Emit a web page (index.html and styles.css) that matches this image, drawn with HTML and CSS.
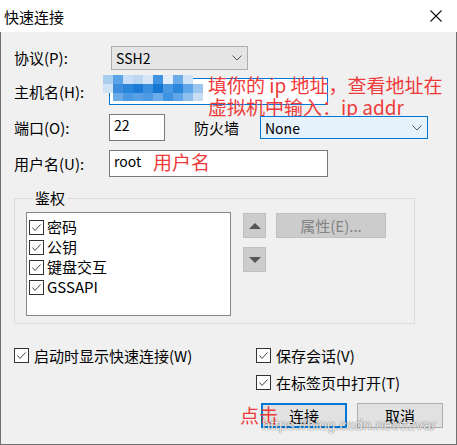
FILE: index.html
```html
<!DOCTYPE html>
<html lang="zh-CN">
<head>
  <meta charset="UTF-8" />
  <title>快速连接</title>
  <link rel="stylesheet" href="styles.css">
</head>
<body>
  <div class="dialog">
    <div class="titlebar">
      <span class="title">快速连接</span>
      <svg class="close" width="12" height="12" viewBox="0 0 12 12">
        <path d="M0.5 0.5 L11.5 11.5 M11.5 0.5 L0.5 11.5" stroke="#111" stroke-width="1.1" fill="none"/>
      </svg>
    </div>

    <div class="content">
      <div class="row row-proto">
        <label class="lbl">协议(P):</label>
        <div class="select select-proto">
          <span>SSH2</span>
          <svg class="chev" width="10" height="6" viewBox="0 0 10 6"><path d="M0.5 0.5 L5 5 L9.5 0.5" stroke="#555" fill="none"/></svg>
        </div>
      </div>

      <div class="row row-host">
        <label class="lbl">主机名(H):</label>
        <div class="input input-host"></div>
        <!-- mosaic over the host address -->
        <svg class="mosaic" width="108" height="26" viewBox="0 0 108 26">
          <g>
            <rect x="0" y="0" width="10" height="9" fill="#a9cdee"/>
            <rect x="10" y="0" width="10" height="9" fill="#5aa3e6"/>
            <rect x="20" y="0" width="10" height="9" fill="#c8def4"/>
            <rect x="30" y="0" width="10" height="9" fill="#bcd7f2"/>
            <rect x="40" y="0" width="10" height="9" fill="#d6e6f7"/>
            <rect x="50" y="0" width="10" height="9" fill="#3f93e0"/>
            <rect x="60" y="0" width="10" height="9" fill="#e3eefa"/>
            <rect x="70" y="0" width="10" height="9" fill="#6aabe8"/>
            <rect x="80" y="0" width="10" height="9" fill="#cfe2f6"/>
            <rect x="0" y="9" width="10" height="9" fill="#cfe2f6"/>
            <rect x="10" y="9" width="10" height="9" fill="#3d8fdd"/>
            <rect x="20" y="9" width="10" height="9" fill="#2a86db"/>
            <rect x="30" y="9" width="10" height="9" fill="#1c7bd7"/>
            <rect x="40" y="9" width="10" height="9" fill="#3a90df"/>
            <rect x="50" y="9" width="10" height="9" fill="#1676d4"/>
            <rect x="60" y="9" width="10" height="9" fill="#4898e2"/>
            <rect x="70" y="9" width="10" height="9" fill="#2b87db"/>
            <rect x="80" y="9" width="10" height="9" fill="#5ea6e7"/>
            <rect x="90" y="9" width="10" height="9" fill="#9cc6ef"/>
            <rect x="10" y="18" width="10" height="8" fill="#6aabe8"/>
            <rect x="20" y="18" width="10" height="8" fill="#4b99e2"/>
            <rect x="30" y="18" width="10" height="8" fill="#57a0e4"/>
            <rect x="40" y="18" width="10" height="8" fill="#4c9ae2"/>
            <rect x="50" y="18" width="10" height="8" fill="#6caceb"/>
            <rect x="60" y="18" width="10" height="8" fill="#3f93e0"/>
            <rect x="70" y="18" width="10" height="8" fill="#5ea6e7"/>
            <rect x="80" y="18" width="10" height="8" fill="#8fbfee"/>
            <rect x="90" y="18" width="10" height="8" fill="#c6ddf4"/>
          </g>
        </svg>
        <div class="note note-host">填你的 ip 地址，查看地址在<br>虚拟机中输入：ip addr</div>
      </div>

      <div class="row row-port">
        <label class="lbl">端口(O):</label>
        <div class="input input-port">22</div>
        <label class="lbl lbl-fw">防火墙</label>
        <div class="select select-fw">
          <span>None</span>
          <svg class="chev" width="10" height="6" viewBox="0 0 10 6"><path d="M0.5 0.5 L5 5 L9.5 0.5" stroke="#555" fill="none"/></svg>
        </div>
      </div>

      <div class="row row-user">
        <label class="lbl">用户名(U):</label>
        <div class="input input-user">root</div>
        <div class="note note-user">用户名</div>
      </div>

      <fieldset class="group">
        <legend>鉴权</legend>
        <div class="group-body">
          <div class="listbox">
            <div class="item"><span class="cb"><svg width="13" height="13" viewBox="0 0 13 13"><path d="M2.5 6.5 L5 9.5 L10.5 3.5" stroke="#444" fill="none"/></svg></span>密码</div>
            <div class="item"><span class="cb"><svg width="13" height="13" viewBox="0 0 13 13"><path d="M2.5 6.5 L5 9.5 L10.5 3.5" stroke="#444" fill="none"/></svg></span>公钥</div>
            <div class="item"><span class="cb"><svg width="13" height="13" viewBox="0 0 13 13"><path d="M2.5 6.5 L5 9.5 L10.5 3.5" stroke="#444" fill="none"/></svg></span>键盘交互</div>
            <div class="item"><span class="cb"><svg width="13" height="13" viewBox="0 0 13 13"><path d="M2.5 6.5 L5 9.5 L10.5 3.5" stroke="#444" fill="none"/></svg></span>GSSAPI</div>
          </div>
          <div class="arrows">
            <div class="btn-sm"><svg width="12" height="6" viewBox="0 0 12 6"><path d="M0 6 L6 0 L12 6 Z" fill="#555"/></svg></div>
            <div class="btn-sm"><svg width="12" height="6" viewBox="0 0 12 6"><path d="M0 0 L12 0 L6 6 Z" fill="#555"/></svg></div>
          </div>
          <div class="btn-props">属性(E)...</div>
        </div>
      </fieldset>

      <div class="options">
        <div class="opt"><span class="cb"><svg width="13" height="13" viewBox="0 0 13 13"><path d="M2.5 6.5 L5 9.5 L10.5 3.5" stroke="#444" fill="none"/></svg></span>启动时显示快速连接(W)</div>
        <div class="opt"><span class="cb"><svg width="13" height="13" viewBox="0 0 13 13"><path d="M2.5 6.5 L5 9.5 L10.5 3.5" stroke="#444" fill="none"/></svg></span>保存会话(V)</div>
        <div></div>
        <div class="opt"><span class="cb"><svg width="13" height="13" viewBox="0 0 13 13"><path d="M2.5 6.5 L5 9.5 L10.5 3.5" stroke="#444" fill="none"/></svg></span>在标签页中打开(T)</div>
      </div>

      <div class="actions">
        <div class="note note-click">点击</div>
        <button class="btn btn-default">连接</button>
        <button class="btn">取消</button>
        <div class="watermark">https://blog.csdn.net/zzvar</div>
      </div>
    </div>
  </div>
</body>
</html>
```

FILE: styles.css
```css
body {
    margin: 0;
    font-family: "Noto Sans CJK SC", sans-serif;
    font-size: 15px;
    color: #000;
    background: #fff;
}
.dialog {
    width: 457px;
    height: 445px;
    display: flex;
    flex-direction: column;
}
.titlebar {
    height: 32px;
    background: #fff;
    display: flex;
    align-items: center;
    justify-content: space-between;
    padding: 0 15px 0 4px;
}
.title {
    font-size: 15px;
    line-height: 18px;
    padding-top: 1px;
}
.close {
    display: block;
}
.content {
    flex: 1;
    background: #f0f0f0;
    border: 1px solid #707070;
    border-top: none;
    padding: 14px 13px 0 13px;
    position: relative;
}

/* form rows */
.row {
    display: flex;
    align-items: center;
    position: relative;
}
.row + .row {
    margin-top: 9px;
}
.row-host {
    margin-top: 8px !important;
}
.lbl {
    width: 95px;
    flex: none;
    line-height: 18px;
}
.lbl-fw {
    width: 66px;
    margin-left: 29px;
}
.select {
    height: 24px;
    box-sizing: border-box;
    border: 1px solid #adadad;
    background: #e5e5e5;
    display: flex;
    align-items: center;
    justify-content: space-between;
    padding: 0 5px 0 4px;
    font-size: 14px;
}
.select-proto {
    width: 137px;
    margin-left: 2px;
}
.select-fw {
    width: 168px;
    height: 23px;
    border-color: #0078d7;
    background: #e5f1fb;
}
.chev {
    display: block;
}
.input {
    height: 27px;
    box-sizing: border-box;
    border: 1px solid #7a7a7a;
    background: #fff;
    font-size: 14px;
    line-height: 20px;
    padding: 0 4px;
}
.input-host {
    width: 219px;
    border-color: #0078d7;
}
.input-port {
    width: 56px;
}
.input-user {
    width: 219px;
}
.mosaic {
    position: absolute;
    left: 89px;
    top: -3px;
    filter: blur(0.6px);
}
.note {
    position: absolute;
    color: #ee3a3a;
    font-size: 19px;
    line-height: 22px;
    white-space: nowrap;
}
.note-host {
    left: 194px;
    top: -4px;
}
.note-user {
    left: 139px;
    top: 1px;
}

/* auth group */
.group {
    margin: 12px 0 0 0;
    width: 401px;
    box-sizing: border-box;
    border: 1px solid #dcdcdc;
    padding: 5px 0 7px 11px;
}
.group legend {
    padding: 0 2px;
    margin-left: 7px;
    line-height: 18px;
}
.group-body {
    display: flex;
    align-items: flex-start;
}
.listbox {
    width: 205px;
    height: 104px;
    box-sizing: border-box;
    border: 1px solid #828790;
    background: #fff;
    padding: 4px 0 0 2px;
}
.item {
    display: flex;
    align-items: center;
    height: 20px;
    line-height: 20px;
}
.cb {
    width: 15px;
    height: 15px;
    box-sizing: border-box;
    border: 1px solid #333;
    background: #fff;
    display: flex;
    align-items: center;
    justify-content: center;
    margin-right: 3px;
    flex: none;
}
.cb svg {
    display: block;
}
.arrows {
    display: flex;
    flex-direction: column;
    gap: 9px;
    margin: 1px 0 0 12px;
}
.btn-sm {
    width: 23px;
    height: 25px;
    box-sizing: border-box;
    border: 1px solid #bfbfbf;
    background: #cccccc;
    display: flex;
    align-items: center;
    justify-content: center;
}
.btn-props {
    width: 110px;
    height: 25px;
    margin: 1px 0 0 10px;
    box-sizing: border-box;
    border: 1px solid #bfbfbf;
    background: #cccccc;
    color: #838383;
    text-align: center;
    line-height: 23px;
    font-size: 15px;
}

/* bottom options */
.options {
    display: grid;
    grid-template-columns: 242px auto;
    row-gap: 7px;
    margin-top: 21px;
}
.opt {
    display: flex;
    align-items: center;
    height: 20px;
    white-space: nowrap;
}
.opt .cb {
    margin-right: 5px;
}

.actions {
    display: flex;
    justify-content: flex-end;
    gap: 10px;
    margin-top: 11px;
    position: relative;
}
.btn {
    width: 86px;
    height: 25px;
    box-sizing: border-box;
    border: 1px solid #adadad;
    background: #e1e1e1;
    font-family: inherit;
    font-size: 15px;
    padding: 0;
    line-height: 22px;
    color: #000;
}
.btn-default {
    border: 2px solid #0078d7;
}
.note-click {
    left: 226px;
    top: 1px;
}
/* site watermark stamped over the buttons */
.watermark {
    position: absolute;
    left: 248px;
    top: 13px;
    font-family: "Liberation Sans", sans-serif;
    font-size: 15px;
    color: rgba(255, 255, 255, 0.85);
    text-shadow: 0 0 1px rgba(0, 0, 0, 0.5), 0 0 2px rgba(0, 0, 0, 0.25);
    white-space: nowrap;
}
```
